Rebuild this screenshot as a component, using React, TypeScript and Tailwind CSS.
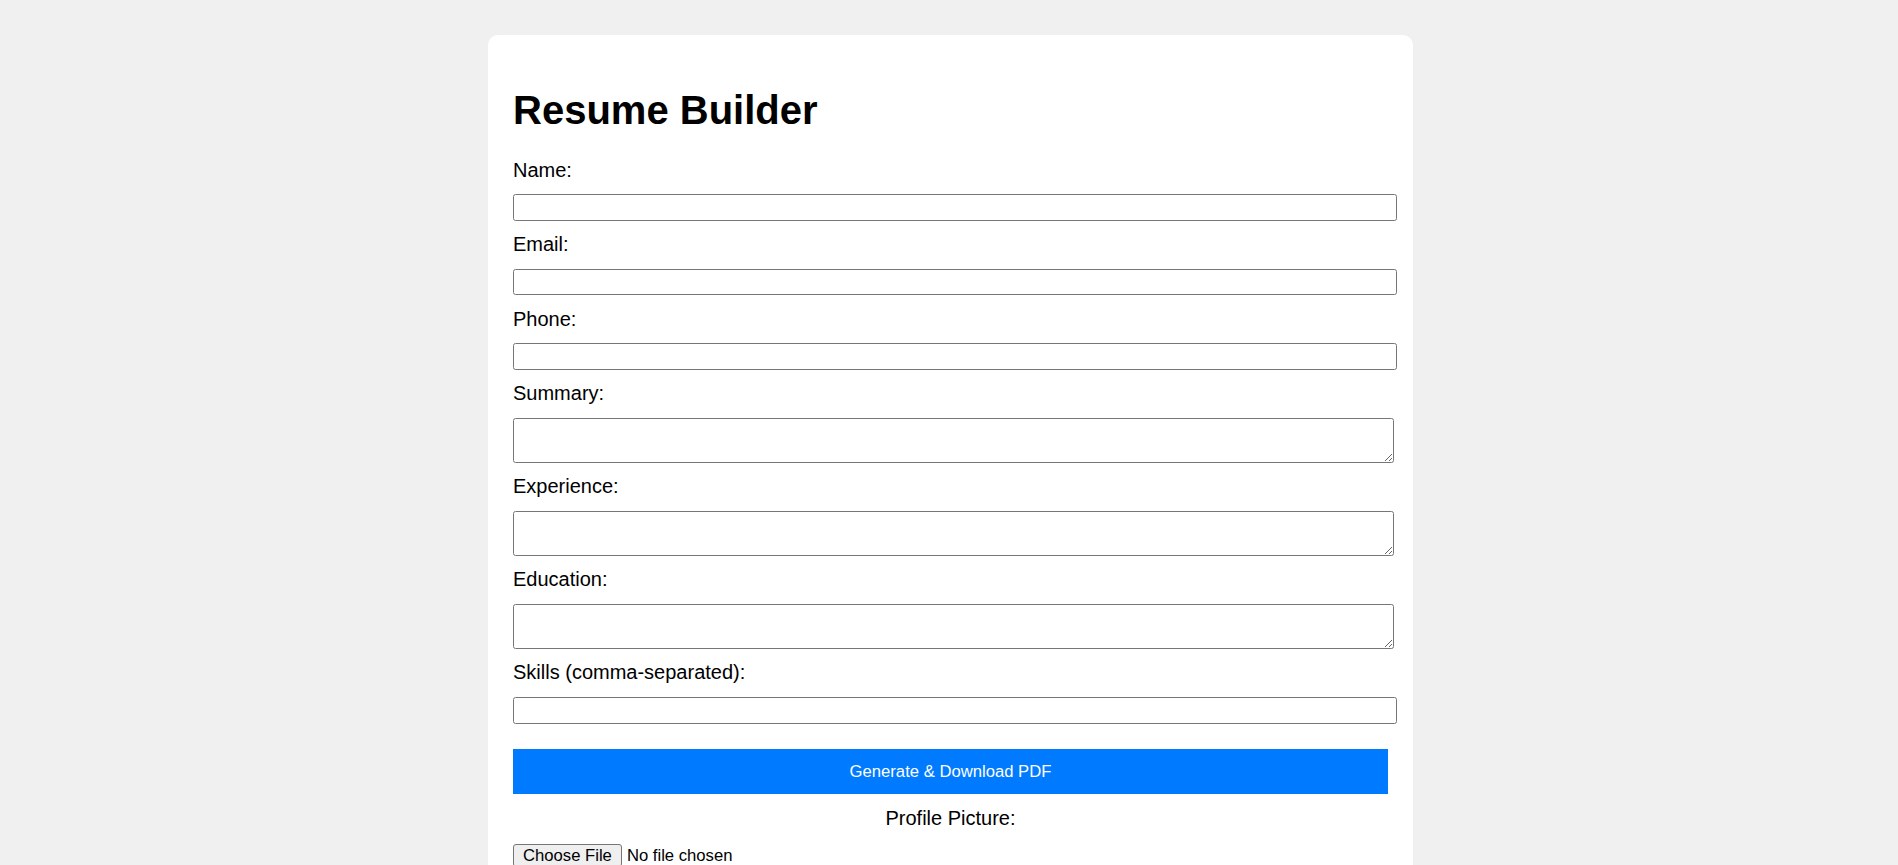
import React from "react";

const labelCls = "block text-[20px] leading-[23px] mb-[12.5px] text-black";
const inputCls =
  "block w-[884px] h-[26.67px] mb-[12.5px] border border-[#767676] rounded-[2.5px] bg-white px-[3px] text-[16.67px] outline-none";
const areaCls =
  "block w-[881px] h-[45px] mb-[12.5px] border border-[#767676] rounded-[2.5px] bg-white px-[3px] py-[2px] text-[16.67px] outline-none";

export default function App() {
  return (
    <div className="min-h-screen bg-[#f0f0f0] pt-[35px] pb-[40px] font-['Liberation_Sans',Arial,sans-serif] text-black">
      <div className="ml-[488px] w-[925px] rounded-[10px] bg-white p-[25px]">
        <h1 className="mt-[26.5px] mb-[26px] text-[40px] font-bold leading-[46px]">Resume Builder</h1>

        <label className={labelCls}>Name:</label>
        <input type="text" className={inputCls} />

        <label className={labelCls}>Email:</label>
        <input type="email" className={inputCls} />

        <label className={labelCls}>Phone:</label>
        <input type="tel" className={inputCls} />

        <label className={labelCls}>Summary:</label>
        <textarea className={areaCls} />

        <label className={labelCls}>Experience:</label>
        <textarea className={areaCls} />

        <label className={labelCls}>Education:</label>
        <textarea className={areaCls} />

        <label className={labelCls}>Skills (comma-separated):</label>
        <input type="text" className={inputCls} />

        <button
          type="button"
          className="mt-[25.5px] flex h-[45px] w-full items-center justify-center bg-[#007bff] text-[16.67px] leading-[19px] text-white"
        >
          Generate &amp; Download PDF
        </button>

        <label className="mt-[12.5px] mb-[14px] block text-center text-[20px] leading-[23px]">Profile Picture:</label>

        <input
          type="file"
          className="block text-[16.67px] leading-[19px] file:mr-[5px] file:rounded-[3px] file:border file:border-[#767676] file:bg-[#efefef] file:px-[9px] file:py-[1px] file:text-black"
        />
      </div>
    </div>
  );
}
